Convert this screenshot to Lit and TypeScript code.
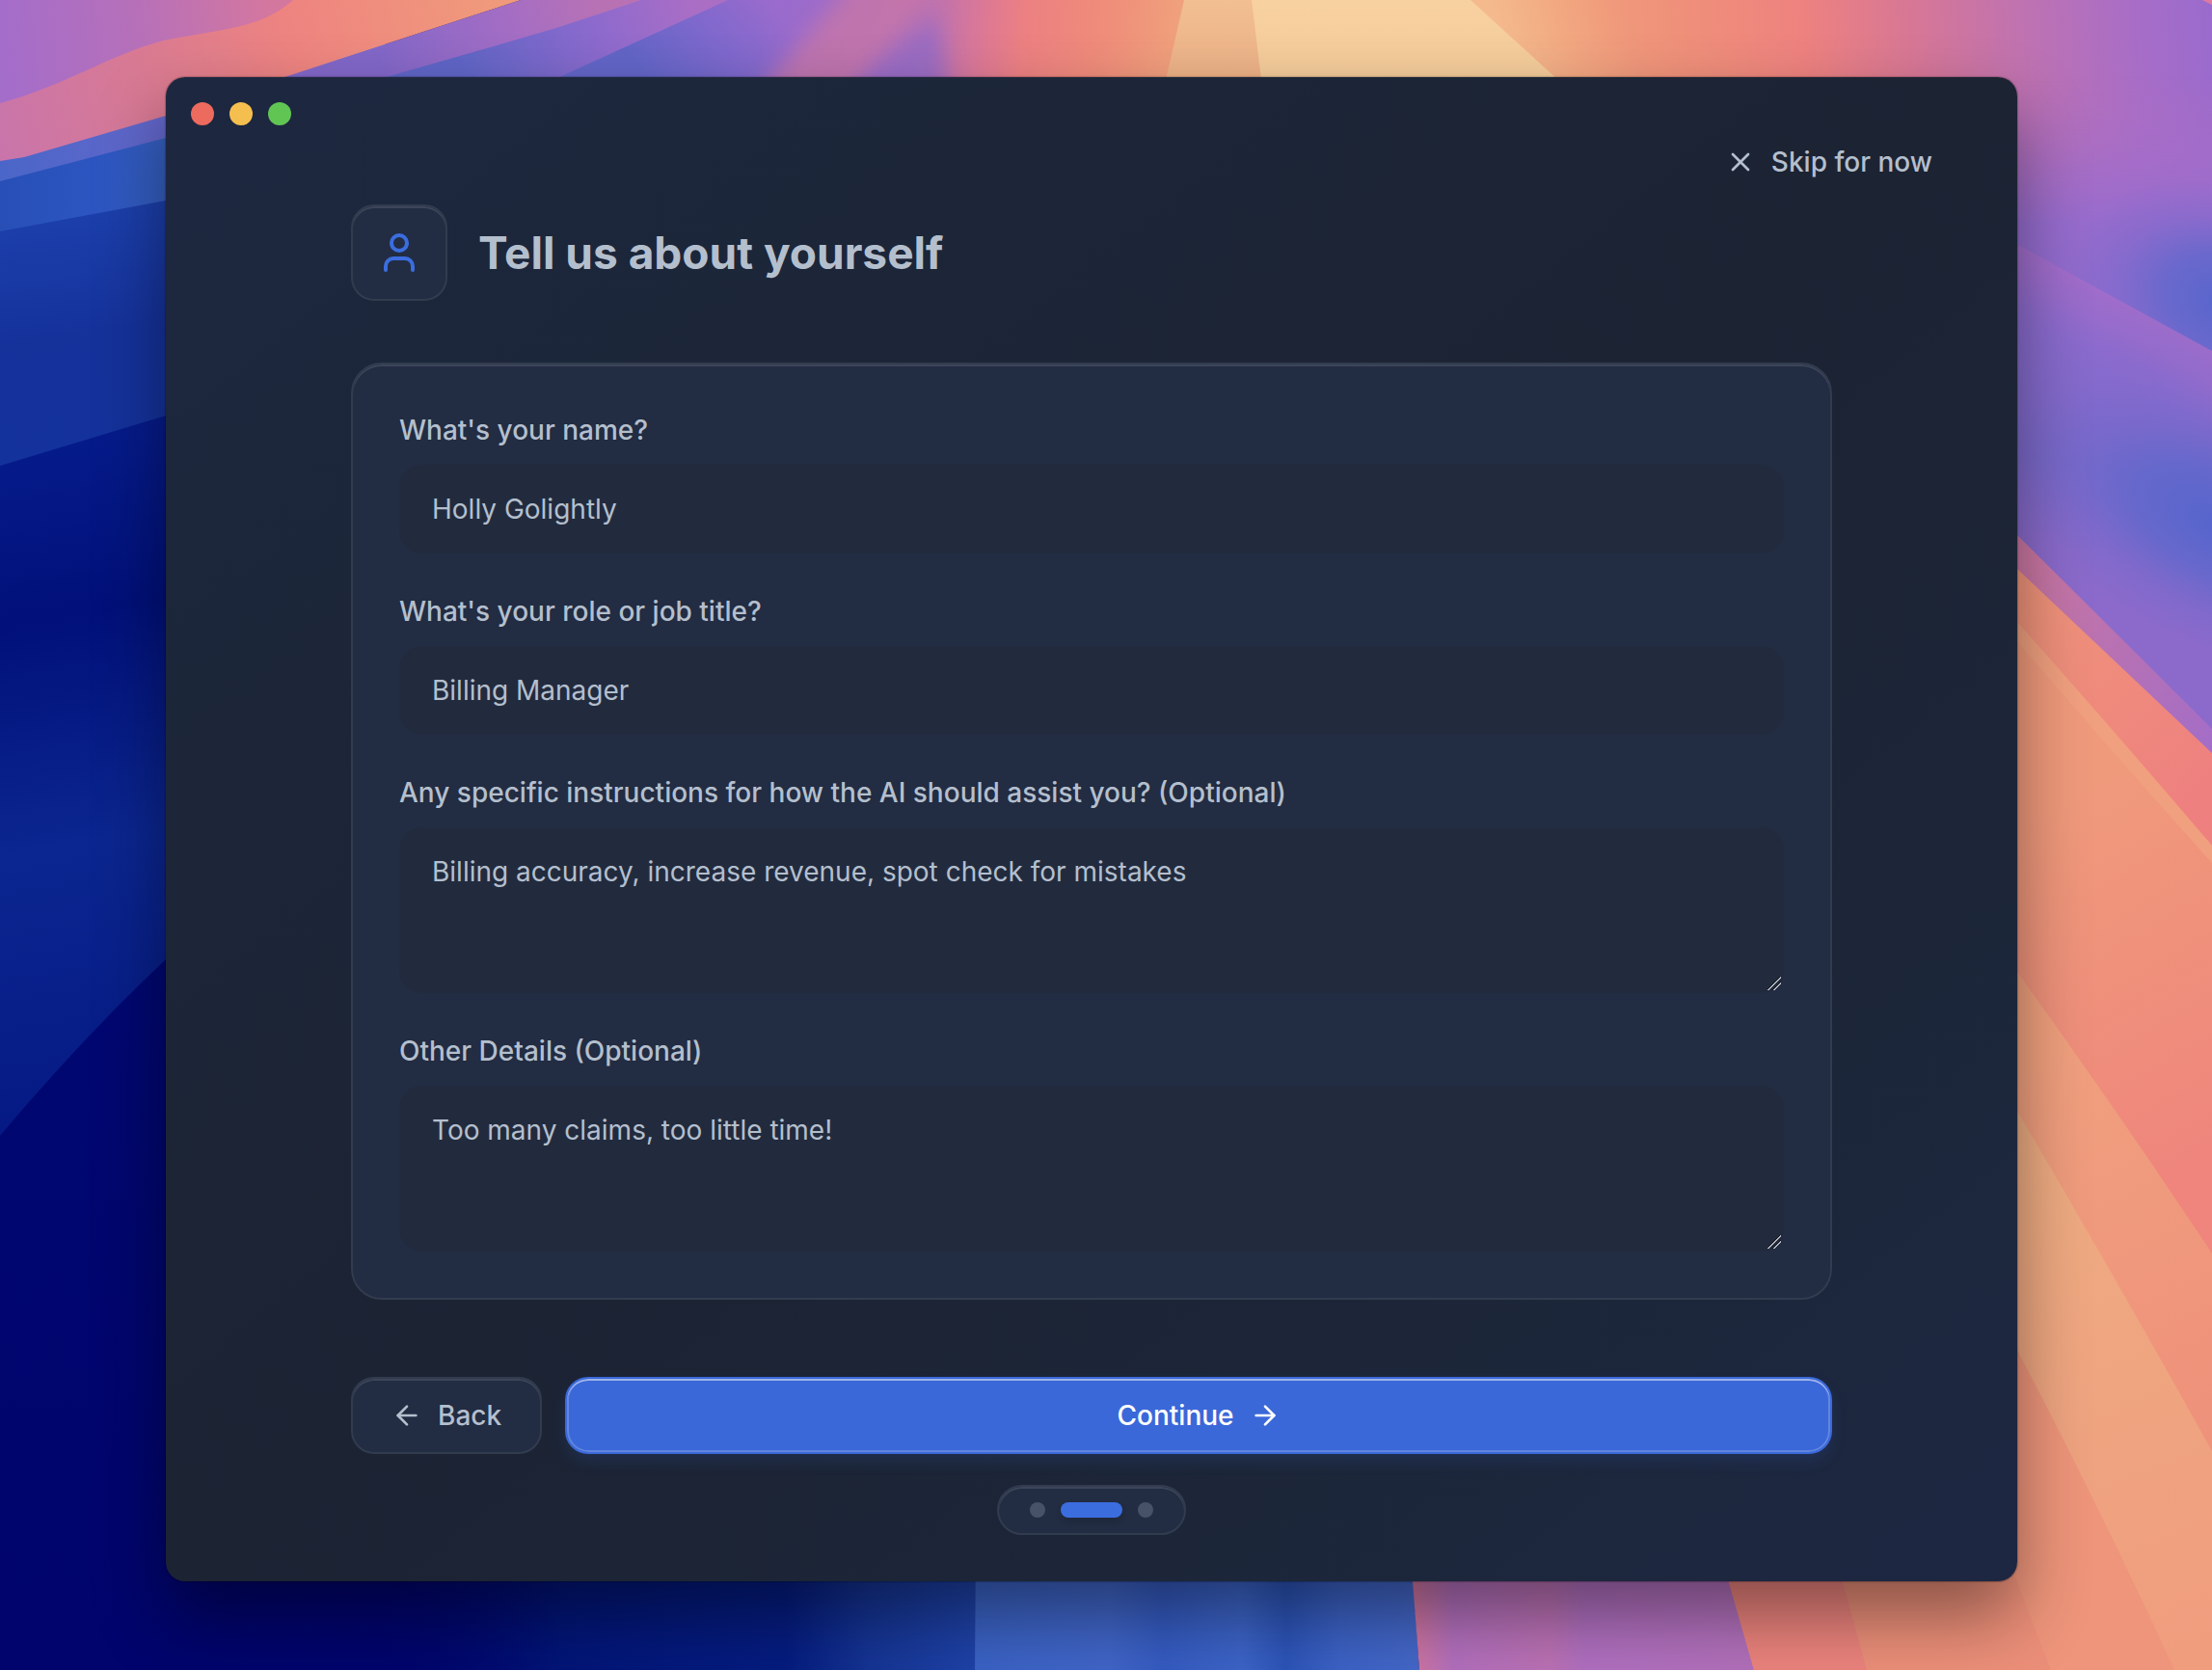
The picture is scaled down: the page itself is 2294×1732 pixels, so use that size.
import { LitElement, html, css, svg } from "lit";
import { customElement, property, state } from "lit/decorators.js";

interface Field {
  id: string;
  label: string;
  value: string;
  multiline: boolean;
}

const FIELDS: Field[] = [
  { id: "name", label: "What's your name?", value: "Holly Golightly", multiline: false },
  { id: "role", label: "What's your role or job title?", value: "Billing Manager", multiline: false },
  {
    id: "instructions",
    label: "Any specific instructions for how the AI should assist you? (Optional)",
    value: "Billing accuracy, increase revenue, spot check for mistakes",
    multiline: true,
  },
  { id: "details", label: "Other Details (Optional)", value: "Too many claims, too little time!", multiline: true },
];

const ICONS = {
  close: svg`<path d="M18 6 6 18"/><path d="m6 6 12 12"/>`,
  user: svg`<path d="M19 21v-2a4 4 0 0 0-4-4H9a4 4 0 0 0-4 4v2"/><circle cx="12" cy="7" r="4"/>`,
  left: svg`<path d="m12 19-7-7 7-7"/><path d="M19 12H5"/>`,
  right: svg`<path d="M5 12h14"/><path d="m12 5 7 7-7 7"/>`,
};

@customElement("line-icon")
class LineIcon extends LitElement {
  @property() name: keyof typeof ICONS = "close";

  static styles = css`
    :host {
      display: inline-flex;
      flex: none;
      width: 32px;
      height: 32px;
    }
    .glyph {
      width: 100%;
      height: 100%;
      fill: none;
      stroke: currentColor;
      stroke-width: 2;
      stroke-linecap: round;
      stroke-linejoin: round;
    }
  `;

  render() {
    return html`<svg class="glyph" viewBox="0 0 24 24" aria-hidden="true">${ICONS[this.name]}</svg>`;
  }
}

@customElement("desktop-wallpaper")
class DesktopWallpaper extends LitElement {
  static styles = css`
    :host {
      display: block;
    }
    .art {
      display: block;
      width: 100%;
      height: 100%;
    }
  `;

  render() {
    return html`
      <svg class="art" viewBox="0 0 2294 1732" preserveAspectRatio="none" aria-hidden="true">
        <defs>
          <filter id="soft" x="-50%" y="-50%" width="200%" height="200%"><feGaussianBlur stdDeviation="11" /></filter>
          <linearGradient id="navy" x1="0" y1="0" x2="0" y2="1">
            <stop offset="0" stop-color="#000c78" />
            <stop offset="1" stop-color="#00046c" />
          </linearGradient>
          <linearGradient id="deep" gradientUnits="userSpaceOnUse" x1="0" y1="450" x2="120" y2="1160">
            <stop offset="0" stop-color="#061c8c" />
            <stop offset="0.27" stop-color="#01107a" />
            <stop offset="0.6" stop-color="#0b2690" />
            <stop offset="1" stop-color="#051984" />
          </linearGradient>
          <linearGradient id="royal" gradientUnits="userSpaceOnUse" x1="0" y1="230" x2="30" y2="480">
            <stop offset="0" stop-color="#1c3fab" />
            <stop offset="0.5" stop-color="#15329b" />
            <stop offset="1" stop-color="#14329c" />
          </linearGradient>
          <linearGradient id="sky" gradientUnits="userSpaceOnUse" x1="0" y1="0" x2="172" y2="0">
            <stop offset="0" stop-color="#274fb6" />
            <stop offset="0.6" stop-color="#2d56c2" />
            <stop offset="1" stop-color="#355fc0" />
          </linearGradient>
          <linearGradient id="periwinkle" gradientUnits="userSpaceOnUse" x1="0" y1="0" x2="172" y2="0">
            <stop offset="0" stop-color="#4a66c8" />
            <stop offset="1" stop-color="#6467cb" />
          </linearGradient>
          <linearGradient id="orchid" gradientUnits="userSpaceOnUse" x1="0" y1="30" x2="280" y2="0">
            <stop offset="0" stop-color="#a46dca" />
            <stop offset="0.5" stop-color="#b670b9" />
            <stop offset="1" stop-color="#d4779f" />
          </linearGradient>
          <linearGradient id="coral" gradientUnits="userSpaceOnUse" x1="0" y1="150" x2="520" y2="10">
            <stop offset="0" stop-color="#c975ab" />
            <stop offset="0.3" stop-color="#d97a93" />
            <stop offset="0.6" stop-color="#ee8480" />
            <stop offset="1" stop-color="#f09a7b" />
          </linearGradient>
          <linearGradient id="violetA" gradientUnits="userSpaceOnUse" x1="620" y1="0" x2="400" y2="80">
            <stop offset="0" stop-color="#b872b4" />
            <stop offset="0.4" stop-color="#a46dc4" />
            <stop offset="1" stop-color="#8267c8" />
          </linearGradient>
          <linearGradient id="violetB" gradientUnits="userSpaceOnUse" x1="720" y1="0" x2="480" y2="80">
            <stop offset="0" stop-color="#ab6ec5" />
            <stop offset="0.4" stop-color="#8e6acd" />
            <stop offset="1" stop-color="#5f65c6" />
          </linearGradient>
          <linearGradient id="violetC" gradientUnits="userSpaceOnUse" x1="800" y1="0" x2="690" y2="100">
            <stop offset="0" stop-color="#9a6bcd" />
            <stop offset="0.5" stop-color="#7e68cc" />
            <stop offset="1" stop-color="#6265c6" />
          </linearGradient>
          <linearGradient id="burst" gradientUnits="userSpaceOnUse" x1="790" y1="0" x2="1230" y2="30">
            <stop offset="0" stop-color="#9a6bcb" stop-opacity="0" />
            <stop offset="0.25" stop-color="#a46dc4" />
            <stop offset="0.4" stop-color="#bd72b0" />
            <stop offset="0.52" stop-color="#dc7896" />
            <stop offset="0.62" stop-color="#ec8082" />
            <stop offset="0.8" stop-color="#ef8c7a" />
            <stop offset="1" stop-color="#f0a27c" />
          </linearGradient>
          <linearGradient id="amber" x1="0" y1="0" x2="0" y2="1">
            <stop offset="0" stop-color="#f1bf92" />
            <stop offset="1" stop-color="#e8a57c" />
          </linearGradient>
          <linearGradient id="cream" x1="0" y1="0" x2="0" y2="1">
            <stop offset="0" stop-color="#f8d1a0" />
            <stop offset="1" stop-color="#f0c695" />
          </linearGradient>
          <linearGradient id="shoulder" gradientUnits="userSpaceOnUse" x1="1560" y1="60" x2="1680" y2="20">
            <stop offset="0" stop-color="#f4ba8e" />
            <stop offset="1" stop-color="#f2a880" stop-opacity="0" />
          </linearGradient>
          <linearGradient id="topRight" gradientUnits="userSpaceOnUse" x1="1520" y1="60" x2="2294" y2="20">
            <stop offset="0" stop-color="#f2b486" />
            <stop offset="0.14" stop-color="#f1a07c" />
            <stop offset="0.3" stop-color="#ef8f7a" />
            <stop offset="0.45" stop-color="#ee827f" />
            <stop offset="0.6" stop-color="#d77796" />
            <stop offset="0.76" stop-color="#bd72b3" />
            <stop offset="0.9" stop-color="#a76dc7" />
            <stop offset="1" stop-color="#9a6bcd" />
          </linearGradient>
          <linearGradient id="rightSide" gradientUnits="userSpaceOnUse" x1="2150" y1="60" x2="2040" y2="640">
            <stop offset="0" stop-color="#b46fc0" />
            <stop offset="0.2" stop-color="#9c6ccc" />
            <stop offset="0.45" stop-color="#8c6bce" />
            <stop offset="0.7" stop-color="#7c69ca" />
            <stop offset="0.85" stop-color="#8a6acb" />
            <stop offset="1" stop-color="#8c6acb" />
          </linearGradient>
          <linearGradient id="streak" gradientUnits="userSpaceOnUse" x1="2180" y1="302" x2="2145" y2="366">
            <stop offset="0" stop-color="#a46dca" stop-opacity="0.85" />
            <stop offset="0.4" stop-color="#9c6ccb" stop-opacity="0.7" />
            <stop offset="1" stop-color="#8c6bce" stop-opacity="0" />
          </linearGradient>
          <radialGradient id="blueGlow">
            <stop offset="0" stop-color="#5565cc" />
            <stop offset="0.4" stop-color="#5d67cc" stop-opacity="0.75" />
            <stop offset="0.7" stop-color="#6868cc" stop-opacity="0.3" />
            <stop offset="1" stop-color="#7069cc" stop-opacity="0" />
          </radialGradient>
          <linearGradient id="fadeIn" x1="0" y1="0" x2="0" y2="1">
            <stop offset="0" stop-color="#fff" stop-opacity="0" />
            <stop offset="1" stop-color="#fff" />
          </linearGradient>
          <mask id="fade" maskUnits="userSpaceOnUse" x="2000" y="0" width="294" height="1000">
            <rect x="2000" y="80" width="294" height="150" fill="url(#fadeIn)" />
            <rect x="2000" y="230" width="294" height="770" fill="#fff" />
          </mask>
          <linearGradient id="roseEdge" gradientUnits="userSpaceOnUse" x1="2092" y1="590" x2="2294" y2="780">
            <stop offset="0" stop-color="#cb77a2" />
            <stop offset="0.5" stop-color="#b671b4" />
            <stop offset="1" stop-color="#a36dc8" />
          </linearGradient>
          <linearGradient id="salmon" gradientUnits="userSpaceOnUse" x1="2092" y1="600" x2="2294" y2="800">
            <stop offset="0" stop-color="#f0957a" />
            <stop offset="1" stop-color="#ee817f" />
          </linearGradient>
          <linearGradient id="peach" gradientUnits="userSpaceOnUse" x1="2092" y1="860" x2="2294" y2="1200">
            <stop offset="0" stop-color="#f09a7c" />
            <stop offset="0.5" stop-color="#ef907b" />
            <stop offset="1" stop-color="#ef857d" />
          </linearGradient>
          <linearGradient id="peachTwo" gradientUnits="userSpaceOnUse" x1="2120" y1="1100" x2="2294" y2="1450">
            <stop offset="0" stop-color="#f0a07e" />
            <stop offset="1" stop-color="#ef927b" />
          </linearGradient>
          <linearGradient id="apricot" gradientUnits="userSpaceOnUse" x1="2092" y1="1200" x2="2294" y2="1700">
            <stop offset="0" stop-color="#eeac82" />
            <stop offset="1" stop-color="#f09d7e" />
          </linearGradient>
          <linearGradient id="floorBlue" gradientUnits="userSpaceOnUse" x1="400" y1="0" x2="1012" y2="0">
            <stop offset="0" stop-color="#02086e" stop-opacity="0" />
            <stop offset="0.3" stop-color="#021578" />
            <stop offset="0.68" stop-color="#051c80" />
            <stop offset="0.82" stop-color="#153494" />
            <stop offset="1" stop-color="#1e42a8" />
          </linearGradient>
          <linearGradient id="cobalt" gradientUnits="userSpaceOnUse" x1="1012" y1="0" x2="1472" y2="0">
            <stop offset="0" stop-color="#3a62c5" />
            <stop offset="0.3" stop-color="#4065c8" />
            <stop offset="0.42" stop-color="#355bc2" />
            <stop offset="0.6" stop-color="#3c64c8" />
            <stop offset="0.7" stop-color="#2c54b8" />
            <stop offset="0.82" stop-color="#3c62c6" />
            <stop offset="1" stop-color="#4467c8" />
          </linearGradient>
          <linearGradient id="mauve" gradientUnits="userSpaceOnUse" x1="1465" y1="0" x2="1820" y2="0">
            <stop offset="0" stop-color="#d0759f" />
            <stop offset="0.12" stop-color="#b26fbd" />
            <stop offset="0.4" stop-color="#bb71b4" />
            <stop offset="0.5" stop-color="#b06fc0" />
            <stop offset="1" stop-color="#b270ba" />
          </linearGradient>
        </defs>

        <rect width="2294" height="1732" fill="url(#navy)" />
        <path d="M0 0H400V830L172 995Q86 1076 0 1178Z" fill="url(#deep)" />
        <path d="M0 0H400V370L172 431 0 483Z" fill="url(#royal)" />
        <path d="M0 0H400V165L172 208 0 240Z" fill="url(#sky)" />
        <path d="M0 0H400V80L172 143 0 188Z" fill="url(#periwinkle)" />

        <path d="M540 0H1300V140H295V80Z" fill="url(#violetA)" />
        <path d="M665 0H1300V140H400V80Q520 46 580 28Z" fill="url(#violetB)" />
        <path d="M755 0H1300V140H540L580 80Z" fill="url(#violetC)" />
        <path d="M790 0H1300V140H740Z" fill="url(#burst)" />
        <path d="M895 -30H985L875 110H775Z" fill="#c977a6" opacity="0.75" filter="url(#soft)" />
        <path d="M972 15L985 110H865Z" fill="#8f6ac8" opacity="0.75" filter="url(#soft)" />
        <path d="M0 0H540L295 80 172 120 25 163 0 167Z" fill="url(#coral)" />
        <path d="M0 0H304C270 30 230 30 170 42 110 58 70 88 0 107Z" fill="url(#orchid)" />

        <path d="M1500 0H2294V400H1500Z" fill="url(#topRight)" />
        <g mask="url(#fade)"><path d="M2000 0H2294V800H2000Z" fill="url(#rightSide)" /></g>
        <ellipse cx="2310" cy="315" rx="170" ry="120" fill="url(#blueGlow)" transform="rotate(24 2310 315)" />
        <ellipse cx="2300" cy="545" rx="230" ry="125" fill="url(#blueGlow)" transform="rotate(28 2300 545)" />
        <path d="M2060 236L2294 364V450L2060 330Z" fill="url(#streak)" />
        <path d="M1228 0H1300L1320 140H1196Z" fill="url(#amber)" />
        <path d="M1525 0H1740V110H1630Z" fill="url(#shoulder)" />
        <path d="M1298 0H1525L1640 105V140H1315Z" fill="url(#cream)" />
        <path d="M2284 0H2294V5Z" fill="#dc7aa0" />

        <path d="M2092 555Q2190 652 2294 756V1732H2050V515Z" fill="url(#roseEdge)" />
        <path d="M2092 590L2294 781V1732H1794L1700 1500H2060V560Z" fill="url(#salmon)" />
        <path d="M2092 645Q2190 755 2294 877V1100H2060V610Z" fill="#f1a07f" />
        <path d="M2092 665Q2195 785 2294 895V1732H2060V630Z" fill="url(#peach)" />
        <path d="M2092 1008Q2200 1158 2294 1300V1732H2060V970Z" fill="url(#peachTwo)" />
        <path d="M2092 1152Q2200 1336 2294 1505V1732H2060V1110Z" fill="url(#apricot)" />
        <path d="M2092 1400Q2176 1560 2255 1732H1936L1890 1580H2060V1350Z" fill="#ee957b" />
        <path d="M2080 1610L2127 1732H1936L1890 1580Z" fill="#ec8f79" />

        <path d="M400 1600H1012V1732H400Z" fill="url(#floorBlue)" />
        <path d="M1012 1600H1463L1472 1732H1011Z" fill="url(#cobalt)" />
        <path d="M1462 1600H1782L1819 1732H1472Z" fill="url(#mauve)" />
        <path d="M1781 1600H1900L1936 1732H1819Z" fill="#ec837d" />
      </svg>
    `;
  }
}

@customElement("app-root")
class AppRoot extends LitElement {
  @state() private step = 1;

  static styles = css`
    :host {
      display: grid;
      box-sizing: border-box;
      min-height: 100vh;
      position: relative;
      padding: 80px 202px 92px 172px;
      font-family: Inter, "Liberation Sans", sans-serif;
      font-size: 28px;
      line-height: 40px;
      color: #b4bfcd;
    }
    *,
    *::before {
      box-sizing: border-box;
    }
    .wallpaper {
      position: absolute;
      inset: 0;
    }
    .window {
      position: relative;
      display: flex;
      flex-direction: column;
      border-radius: 20px;
      padding: 26px 26px 48px;
      background: linear-gradient(to bottom right, #1d2740, #1c2638 25%, #1c2333 50%, #1c2638 75%, #1d2742);
      box-shadow: 0 0 2px rgba(0, 0, 0, 0.7), 0 36px 72px rgba(0, 0, 0, 0.42);
    }
    .lights {
      display: flex;
      gap: 16px;
    }
    .light {
      width: 24px;
      height: 24px;
      padding: 0;
      border: 0;
      border-radius: 50%;
    }
    .close {
      background: #ed6a5e;
    }
    .minimize {
      background: #f5bf4f;
    }
    .zoom {
      background: #61c554;
    }
    .topbar {
      display: flex;
      justify-content: flex-end;
      padding: 18px 38px 24px;
    }
    button {
      font: inherit;
      color: inherit;
      cursor: pointer;
    }
    .skip {
      display: flex;
      align-items: center;
      gap: 16px;
      padding: 0 24px;
      border: 0;
      background: none;
      font-weight: 500;
    }
    .content {
      display: flex;
      flex-direction: column;
      width: 100%;
      max-width: 1536px;
      margin: 0 auto;
    }
    .heading {
      display: flex;
      align-items: center;
      gap: 32px;
      margin-bottom: 64px;
    }
    .badge {
      display: grid;
      place-items: center;
      width: 100px;
      height: 100px;
      color: #3b6ddf;
    }
    .badge-icon {
      width: 48px;
      height: 48px;
    }
    .title {
      margin: 0;
      font-size: 46px;
      line-height: 56px;
      font-weight: 700;
    }
    .glass {
      border: 2px solid #323c4f;
      background: #222c42;
      box-shadow: inset 0 2px 0 rgba(255, 255, 255, 0.12);
      border-radius: 24px;
    }
    .card {
      display: flex;
      flex-direction: column;
      gap: 40px;
      padding: 48px;
      margin-bottom: 80px;
      border-radius: 32px;
    }
    .field {
      display: flex;
      flex-direction: column;
      gap: 16px;
    }
    .label {
      font-weight: 500;
    }
    .control {
      display: block;
      width: 100%;
      margin: 0;
      padding: 24px 32px;
      border: 2px solid transparent;
      border-radius: 24px;
      background: #222b3e;
      font: inherit;
      color: inherit;
      outline: none;
    }
    .line {
      height: 92px;
    }
    .area {
      height: 172px;
      resize: vertical;
      overflow: auto;
    }
    .area::-webkit-resizer {
      background: linear-gradient(
          135deg,
          transparent 43%,
          #0b0f18 43% 47%,
          #b4b6ba 47% 54%,
          transparent 54% 66%,
          #0b0f18 66% 70%,
          #b4b6ba 70% 77%,
          transparent 77%
        )
        0 0 / 14px 14px no-repeat;
    }
    .control:focus-visible {
      border-color: #3b6ddf;
    }
    .actions {
      display: flex;
      gap: 24px;
      margin-bottom: 32px;
    }
    .action {
      display: flex;
      align-items: center;
      justify-content: center;
      gap: 16px;
      height: 80px;
      padding: 0 40px;
      font-weight: 500;
    }
    .next {
      flex: 1;
      border: 2px solid #3b69da;
      border-radius: 24px;
      background: #3b68d8;
      color: #fff;
      box-shadow: inset 0 2px 0 rgba(255, 255, 255, 0.38), inset 0 0 0 2px rgba(255, 255, 255, 0.2),
        0 8px 16px rgba(59, 105, 218, 0.14);
    }
    .steps {
      display: flex;
      align-items: center;
      gap: 16px;
      align-self: center;
      margin: 0;
      padding: 16px 32px;
      list-style: none;
      border-radius: 26px;
    }
    .dot {
      width: 16px;
      height: 16px;
      border-radius: 8px;
      background: #475268;
    }
    .current {
      width: 64px;
      background: #3b6ddf;
      box-shadow: 0 4px 6px rgba(0, 0, 0, 0.12);
    }
  `;

  private renderField(f: Field) {
    return html`
      <div class="field">
        <label class="label" for=${f.id}>${f.label}</label>
        ${f.multiline
          ? html`<textarea class="control area" id=${f.id} rows="3" .value=${f.value}></textarea>`
          : html`<input class="control line" id=${f.id} type="text" .value=${f.value} />`}
      </div>
    `;
  }

  render() {
    return html`
      <desktop-wallpaper class="wallpaper"></desktop-wallpaper>
      <main class="window">
        <div class="lights">
          <button class="light close" aria-label="Close"></button>
          <button class="light minimize" aria-label="Minimize"></button>
          <button class="light zoom" aria-label="Zoom"></button>
        </div>
        <div class="topbar">
          <button class="skip"><line-icon name="close"></line-icon>Skip for now</button>
        </div>
        <form class="content" @submit=${(e: Event) => e.preventDefault()}>
          <header class="heading">
            <div class="badge glass"><line-icon class="badge-icon" name="user"></line-icon></div>
            <h1 class="title">Tell us about yourself</h1>
          </header>
          <section class="card glass">${FIELDS.map((f) => this.renderField(f))}</section>
          <div class="actions">
            <button class="action glass" type="button" @click=${() => (this.step = Math.max(0, this.step - 1))}>
              <line-icon name="left"></line-icon>Back
            </button>
            <button class="action next" type="submit" @click=${() => (this.step = Math.min(2, this.step + 1))}>
              Continue<line-icon name="right"></line-icon>
            </button>
          </div>
          <ol class="steps glass">
            ${[0, 1, 2].map((i) => html`<li class="dot ${i === this.step ? "current" : ""}"></li>`)}
          </ol>
        </form>
      </main>
    `;
  }
}
